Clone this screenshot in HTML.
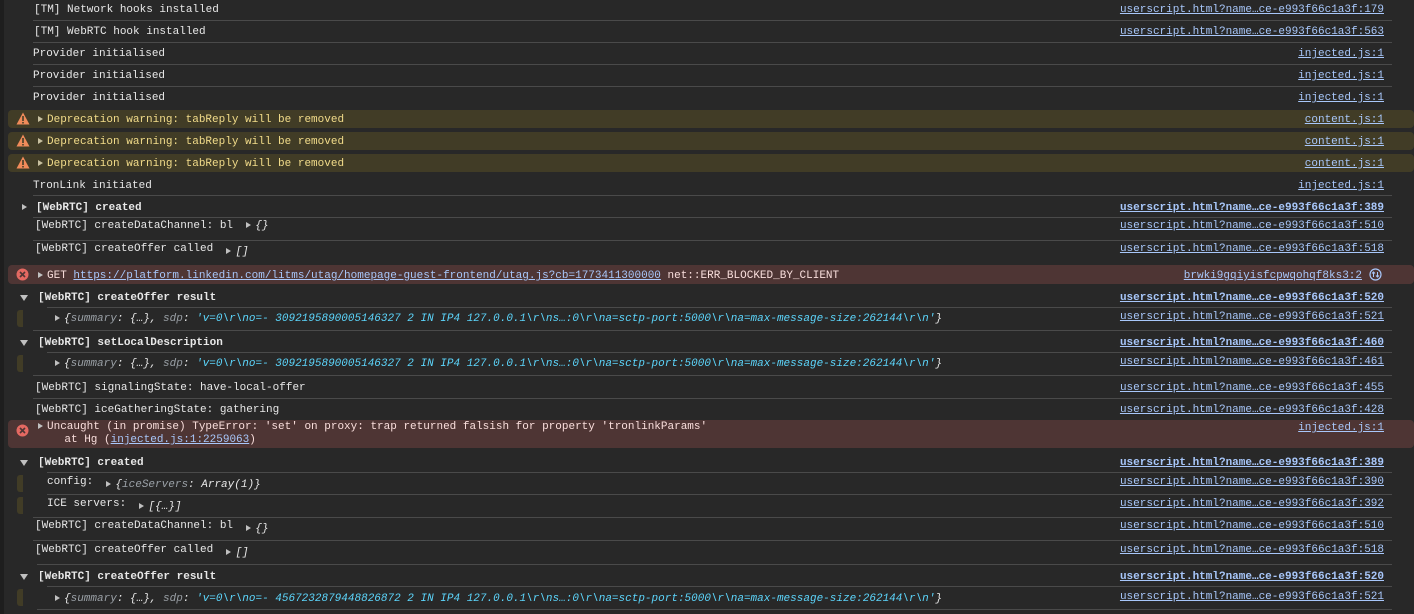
<!DOCTYPE html>
<html><head><meta charset="utf-8"><style>
html,body{margin:0;padding:0;width:1414px;height:614px;overflow:hidden;background:#282828;}
body{position:relative;font:11px/14px "Liberation Mono","DejaVu Sans Mono",monospace;color:#e8e8e8;}
.lb{position:absolute;left:0;top:0;width:4px;height:614px;background:#1e1e1e;}
.t{position:absolute;white-space:pre;margin-top:1px;}
.r{position:absolute;right:30px;white-space:pre;color:#a8c7fa;text-decoration:underline;margin-top:1px;}
.b{font-weight:bold;}
.s{position:absolute;height:1px;background:#4a4a4a;right:22px;}
.w{position:absolute;left:8px;right:0;height:18px;background:#413c26;border-radius:4px;}
.e{position:absolute;left:8px;right:0;background:#4e3534;border-radius:4px;}
.wt{color:#f2dc8a;}
.k{color:#9aa0a6;font-style:italic;}
.i{font-style:italic;}
.c{color:#5cd5fb;font-style:italic;}
.g{position:absolute;left:17px;width:6px;height:17px;background:#413c26;border-radius:3px 0 0 3px;}
.tri{display:inline-block;width:0;height:0;border-left:5px solid #c0c0c0;border-top:3.5px solid transparent;border-bottom:3.5px solid transparent;margin-right:4px;}
.trd{position:absolute;width:0;height:0;border-top:6px solid #c0c0c0;border-left:4px solid transparent;border-right:4px solid transparent;}
.ic{position:absolute;left:16px;}
</style></head><body>
<div class="lb"></div>

<div class="t" style="left:34px;top:2px">[TM] Network hooks installed</div><div class="r" style="top:2px">userscript.html?name…ce-e993f66c1a3f:179</div>
<div class="s" style="left:33px;top:20px"></div>
<div class="t" style="left:34px;top:24px">[TM] WebRTC hook installed</div><div class="r" style="top:24px">userscript.html?name…ce-e993f66c1a3f:563</div>
<div class="s" style="left:33px;top:42px"></div>
<div class="t" style="left:33px;top:46px">Provider initialised</div><div class="r" style="top:46px">injected.js:1</div>
<div class="s" style="left:33px;top:64px"></div>
<div class="t" style="left:33px;top:68px">Provider initialised</div><div class="r" style="top:68px">injected.js:1</div>
<div class="s" style="left:33px;top:86px"></div>
<div class="t" style="left:33px;top:90px">Provider initialised</div><div class="r" style="top:90px">injected.js:1</div>

<div class="w" style="top:110px"></div>
<div class="w" style="top:132px"></div>
<div class="w" style="top:154px"></div>
<svg class="ic" style="top:112px" width="14" height="13" viewBox="0 0 14 13"><path d="M7 0.5L13.5 12.5H0.5Z" fill="#f08b5a"/><rect x="6.2" y="4" width="1.6" height="5" fill="#413c26"/><rect x="6.2" y="10" width="1.6" height="1.5" fill="#413c26"/></svg>
<svg class="ic" style="top:134px" width="14" height="13" viewBox="0 0 14 13"><path d="M7 0.5L13.5 12.5H0.5Z" fill="#f08b5a"/><rect x="6.2" y="4" width="1.6" height="5" fill="#413c26"/><rect x="6.2" y="10" width="1.6" height="1.5" fill="#413c26"/></svg>
<svg class="ic" style="top:156px" width="14" height="13" viewBox="0 0 14 13"><path d="M7 0.5L13.5 12.5H0.5Z" fill="#f08b5a"/><rect x="6.2" y="4" width="1.6" height="5" fill="#413c26"/><rect x="6.2" y="10" width="1.6" height="1.5" fill="#413c26"/></svg>
<div class="t wt" style="left:38px;top:112px"><span class="tri" style="border-left-color:#c8c0a0"></span>Deprecation warning: tabReply will be removed</div><div class="r" style="top:112px">content.js:1</div>
<div class="t wt" style="left:38px;top:134px"><span class="tri" style="border-left-color:#c8c0a0"></span>Deprecation warning: tabReply will be removed</div><div class="r" style="top:134px">content.js:1</div>
<div class="t wt" style="left:38px;top:156px"><span class="tri" style="border-left-color:#c8c0a0"></span>Deprecation warning: tabReply will be removed</div><div class="r" style="top:156px">content.js:1</div>

<div class="t" style="left:33px;top:178px">TronLink initiated</div><div class="r" style="top:178px">injected.js:1</div>
<div class="s" style="left:33px;top:195px"></div>
<div class="t b" style="left:22px;top:200px"><span class="tri" style="margin-right:9px"></span>[WebRTC] created</div><div class="r b" style="top:200px">userscript.html?name…ce-e993f66c1a3f:389</div>
<div class="s" style="left:33px;top:217px"></div>
<div class="t" style="left:35px;top:218px">[WebRTC] createDataChannel: bl  <span class="tri"></span><span class="i">{}</span></div><div class="r" style="top:218px">userscript.html?name…ce-e993f66c1a3f:510</div>
<div class="s" style="left:33px;top:240px"></div>
<div class="t" style="left:35px;top:241px">[WebRTC] createOffer called  <span class="tri" style="position:relative;top:3px"></span><span class="i" style="position:relative;top:3px">[]</span></div><div class="r" style="top:241px">userscript.html?name…ce-e993f66c1a3f:518</div>

<div class="e" style="top:265px;height:19px"></div>
<svg class="ic" style="top:268px" width="13" height="13" viewBox="0 0 13 13"><circle cx="6.5" cy="6.5" r="6" fill="#e46962"/><path d="M4 4L9 9M9 4L4 9" stroke="#4e3534" stroke-width="1.6"/></svg>
<div class="t" style="left:38px;top:268px;color:#f9dedc"><span class="tri"></span>GET <span style="color:#a8c7fa;text-decoration:underline">https://platform.linkedin.com/litms/utag/homepage-guest-frontend/utag.js?cb=1773411300000</span> net::ERR_BLOCKED_BY_CLIENT</div>
<div class="r" style="top:268px;right:52px">brwki9gqiyisfcpwqohqf8ks3:2</div>
<svg style="position:absolute;left:1369px;top:268px" width="13" height="13" viewBox="0 0 13 13"><circle cx="6.5" cy="6.5" r="5.5" fill="none" stroke="#a8c7fa" stroke-width="1.2"/><path d="M4.5 9V4M3 5.5L4.5 4L6 5.5M8.5 4V9M7 7.5L8.5 9L10 7.5" stroke="#a8c7fa" fill="none" stroke-width="1"/></svg>

<div class="trd" style="left:20px;top:295px"></div>
<div class="t b" style="left:38px;top:290px">[WebRTC] createOffer result</div><div class="r b" style="top:290px">userscript.html?name…ce-e993f66c1a3f:520</div>
<div class="s" style="left:47px;top:307px"></div>
<div class="g" style="top:310px"></div>
<div class="t" style="left:55px;top:311px"><span class="tri"></span><span class="i">{</span><span class="k">summary</span><span class="i">: {…}, </span><span class="k">sdp</span><span class="i">: </span><span class="c">'v=0\r\no=- 3092195890005146327 2 IN IP4 127.0.0.1\r\ns…:0\r\na=sctp-port:5000\r\na=max-message-size:262144\r\n'</span><span class="i">}</span></div><div class="r" style="top:309px">userscript.html?name…ce-e993f66c1a3f:521</div>
<div class="s" style="left:33px;top:330px"></div>

<div class="trd" style="left:20px;top:340px"></div>
<div class="t b" style="left:38px;top:335px">[WebRTC] setLocalDescription</div><div class="r b" style="top:335px">userscript.html?name…ce-e993f66c1a3f:460</div>
<div class="s" style="left:47px;top:352px"></div>
<div class="g" style="top:355px"></div>
<div class="t" style="left:55px;top:356px"><span class="tri"></span><span class="i">{</span><span class="k">summary</span><span class="i">: {…}, </span><span class="k">sdp</span><span class="i">: </span><span class="c">'v=0\r\no=- 3092195890005146327 2 IN IP4 127.0.0.1\r\ns…:0\r\na=sctp-port:5000\r\na=max-message-size:262144\r\n'</span><span class="i">}</span></div><div class="r" style="top:354px">userscript.html?name…ce-e993f66c1a3f:461</div>
<div class="s" style="left:33px;top:375px"></div>

<div class="t" style="left:35px;top:380px">[WebRTC] signalingState: have-local-offer</div><div class="r" style="top:380px">userscript.html?name…ce-e993f66c1a3f:455</div>
<div class="s" style="left:33px;top:398px"></div>
<div class="t" style="left:35px;top:402px">[WebRTC] iceGatheringState: gathering</div><div class="r" style="top:402px">userscript.html?name…ce-e993f66c1a3f:428</div>

<div class="e" style="top:420px;height:28px"></div>
<svg class="ic" style="top:424px" width="13" height="13" viewBox="0 0 13 13"><circle cx="6.5" cy="6.5" r="6" fill="#e46962"/><path d="M4 4L9 9M9 4L4 9" stroke="#4e3534" stroke-width="1.6"/></svg>
<div class="t" style="left:38px;top:420px;color:#f9dedc;line-height:13px"><span class="tri"></span>Uncaught (in promise) TypeError: 'set' on proxy: trap returned falsish for property 'tronlinkParams'
    at Hg (<span style="color:#a8c7fa;text-decoration:underline">injected.js:1:2259063</span>)</div>
<div class="r" style="top:420px">injected.js:1</div>

<div class="trd" style="left:20px;top:460px"></div>
<div class="t b" style="left:38px;top:455px">[WebRTC] created</div><div class="r b" style="top:455px">userscript.html?name…ce-e993f66c1a3f:389</div>
<div class="s" style="left:47px;top:472px"></div>
<div class="g" style="top:475px"></div>
<div class="t" style="left:47px;top:474px">config:  <span class="tri" style="position:relative;top:3px"></span><span class="i" style="position:relative;top:3px">{<span class="k">iceServers</span>: Array(1)}</span></div><div class="r" style="top:474px">userscript.html?name…ce-e993f66c1a3f:390</div>
<div class="s" style="left:47px;top:494px"></div>
<div class="g" style="top:497px"></div>
<div class="t" style="left:47px;top:496px">ICE servers:  <span class="tri" style="position:relative;top:3px"></span><span class="i" style="position:relative;top:3px">[{…}]</span></div><div class="r" style="top:496px">userscript.html?name…ce-e993f66c1a3f:392</div>
<div class="s" style="left:33px;top:517px"></div>
<div class="t" style="left:35px;top:518px">[WebRTC] createDataChannel: bl  <span class="tri" style="position:relative;top:3px"></span><span class="i" style="position:relative;top:3px">{}</span></div><div class="r" style="top:518px">userscript.html?name…ce-e993f66c1a3f:510</div>
<div class="s" style="left:33px;top:540px"></div>
<div class="t" style="left:35px;top:542px">[WebRTC] createOffer called  <span class="tri" style="position:relative;top:3px"></span><span class="i" style="position:relative;top:3px">[]</span></div><div class="r" style="top:542px">userscript.html?name…ce-e993f66c1a3f:518</div>
<div class="s" style="left:37px;top:564px"></div>

<div class="trd" style="left:20px;top:574px"></div>
<div class="t b" style="left:38px;top:569px">[WebRTC] createOffer result</div><div class="r b" style="top:569px">userscript.html?name…ce-e993f66c1a3f:520</div>
<div class="s" style="left:47px;top:586px"></div>
<div class="g" style="top:589px"></div>
<div class="t" style="left:55px;top:591px"><span class="tri"></span><span class="i">{</span><span class="k">summary</span><span class="i">: {…}, </span><span class="k">sdp</span><span class="i">: </span><span class="c">'v=0\r\no=- 4567232879448826872 2 IN IP4 127.0.0.1\r\ns…:0\r\na=sctp-port:5000\r\na=max-message-size:262144\r\n'</span><span class="i">}</span></div><div class="r" style="top:589px">userscript.html?name…ce-e993f66c1a3f:521</div>
<div class="s" style="left:37px;top:609px"></div>
</body></html>
